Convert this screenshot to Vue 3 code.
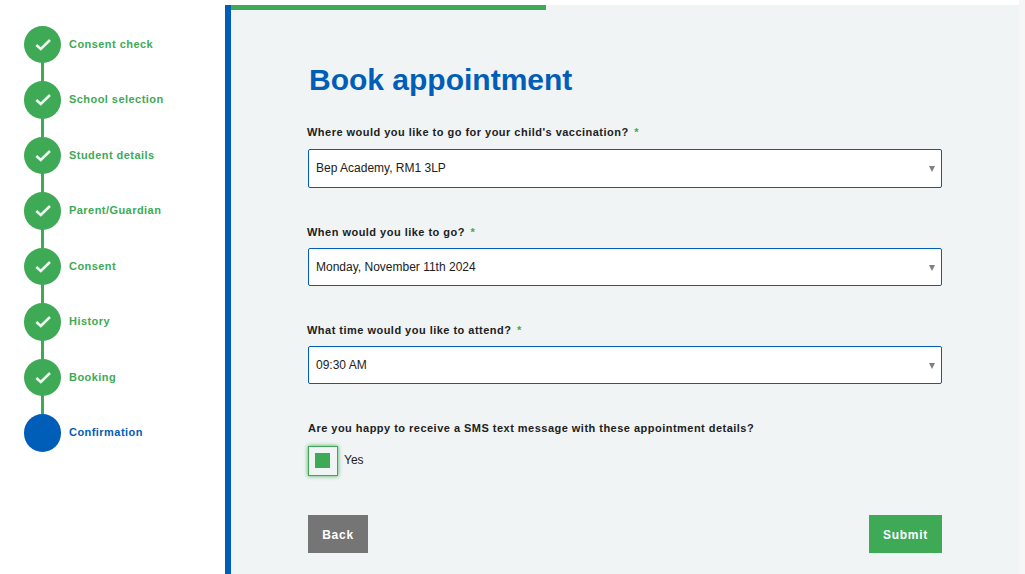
<script setup>
const steps = [
  { label: 'Consent check', done: true },
  { label: 'School selection', done: true },
  { label: 'Student details', done: true },
  { label: 'Parent/Guardian', done: true },
  { label: 'Consent', done: true },
  { label: 'History', done: true },
  { label: 'Booking', done: true },
  { label: 'Confirmation', done: false },
]
const fields = [
  { label: "Where would you like to go for your child's vaccination?", value: 'Bep Academy, RM1 3LP' },
  { label: 'When would you like to go?', value: 'Monday, November 11th 2024' },
  { label: 'What time would you like to attend?', value: '09:30 AM' },
]
</script>

<template>
  <div class="page">
    <aside class="sidebar">
      <ol class="steps">
        <li v-for="s in steps" :key="s.label" class="step" :class="{ done: s.done }">
          <span class="dot">
            <svg v-if="s.done" width="18" height="14" viewBox="0 0 18 14">
              <path d="M2.3 7 L6.8 11 L16 2" fill="none" stroke="#eef7f0" stroke-width="2.6" />
            </svg>
          </span>
          <span class="step-label">{{ s.label }}</span>
        </li>
      </ol>
    </aside>
    <main class="panel">
      <div class="progress"></div>
      <form class="form" @submit.prevent>
        <h1 class="title">Book appointment</h1>
        <div v-for="f in fields" :key="f.label" class="field">
          <label class="label">{{ f.label }} <span class="req">*</span></label>
          <div class="select">
            <span>{{ f.value }}</span>
            <i class="arrow"></i>
          </div>
        </div>
        <p class="label sms">Are you happy to receive a SMS text message with these appointment details?</p>
        <div class="check-row">
          <span class="check"><span class="check-fill"></span></span>
          <span class="yes">Yes</span>
        </div>
        <div class="actions">
          <button type="button" class="btn back">Back</button>
          <button type="submit" class="btn submit">Submit</button>
        </div>
      </form>
    </main>
    <div class="rail"></div>
  </div>
</template>

<style>
html, body { margin: 0; background: #fff; overflow: hidden; }
</style>

<style scoped>
.page {
  display: flex;
  height: 574px;
  font-family: "Liberation Sans", Arial, sans-serif;
  color: #212121;
  background: #fff;
}
.sidebar { width: 225px; flex: none; padding-top: 5px; box-sizing: border-box; }
.steps {
  list-style: none;
  margin: 0;
  padding: 20.9px 0 0 24px;
  display: grid;
  grid-auto-rows: 55.5px;
}
.step {
  position: relative;
  display: flex;
  align-items: flex-start;
  gap: 8px;
  color: #005eb8;
}
.step.done { color: #3eaa55; }
.step:not(:last-child)::after {
  content: "";
  position: absolute;
  left: 17px;
  top: 36px;
  width: 3px;
  height: 20px;
  background: #3eaa55;
}
.dot {
  width: 37px;
  height: 37.4px;
  border-radius: 50%;
  background: currentColor;
  display: flex;
  align-items: center;
  justify-content: center;
  flex: none;
}
.step-label {
  font-size: 11px;
  font-weight: 700;
  letter-spacing: 0.45px;
  line-height: 14px;
  margin-top: 11px;
}
.panel {
  width: 794px;
  flex: none;
  margin-top: 5px;
  box-sizing: border-box;
  background: #f0f4f5;
  border-left: 6px solid #005eb8;
}
.rail { width: 6px; flex: none; background: #f6f6f6; }
.progress { width: 315px; height: 5px; background: #3eaa55; }
.form { width: 634px; margin-left: 77px; }
.title {
  margin: 52px 0 0 1px;
  font-size: 30px;
  line-height: 36px;
  font-weight: 700;
  color: #005eb8;
}
.field { margin-bottom: 38px; }
.field:first-of-type { margin-top: 28px; }
.label {
  display: block;
  margin: 0 0 9px -1px;
  font-size: 11px;
  line-height: 13px;
  font-weight: 700;
  letter-spacing: 0.48px;
  color: #212121;
}
.field:first-of-type .label { margin-bottom: 10px; }
.req { color: #3eaa55; margin-left: 2px; }
.select {
  position: relative;
  box-sizing: border-box;
  height: 38px;
  border: 1px solid #005eb8;
  border-radius: 2px;
  background: #fff;
  display: flex;
  align-items: center;
  padding-left: 7px;
  font-size: 12px;
}
.field:first-of-type .select { height: 39px; padding-bottom: 1px; }
.arrow {
  position: absolute;
  right: 6px;
  top: 16px;
  border-left: 3.5px solid transparent;
  border-right: 3.5px solid transparent;
  border-top: 6px solid #808080;
}
.sms { margin: 0; }
.check-row { display: flex; align-items: flex-start; gap: 6px; margin-top: 11px; }
.check {
  box-sizing: border-box;
  width: 30px;
  height: 30px;
  padding: 6px;
  border: 1px solid #3eaa55;
  box-shadow: 0 0 4px #3eaa55;
  background: #f0f4f5;
  display: flex;
}
.check-fill { width: 15px; height: 15px; flex: none; background: #3eaa55; }
.yes { font-size: 12px; line-height: 14px; margin-top: 7px; }
.actions { display: flex; justify-content: space-between; margin-top: 39px; }
.btn {
  height: 38px;
  border: 0;
  color: #fff;
  font-family: inherit;
  font-size: 12px;
  font-weight: 700;
  letter-spacing: 0.75px;
  padding: 2px 0 0;
}
.back { width: 60px; background: #757575; }
.submit { width: 73px; background: #3eaa55; }
</style>
